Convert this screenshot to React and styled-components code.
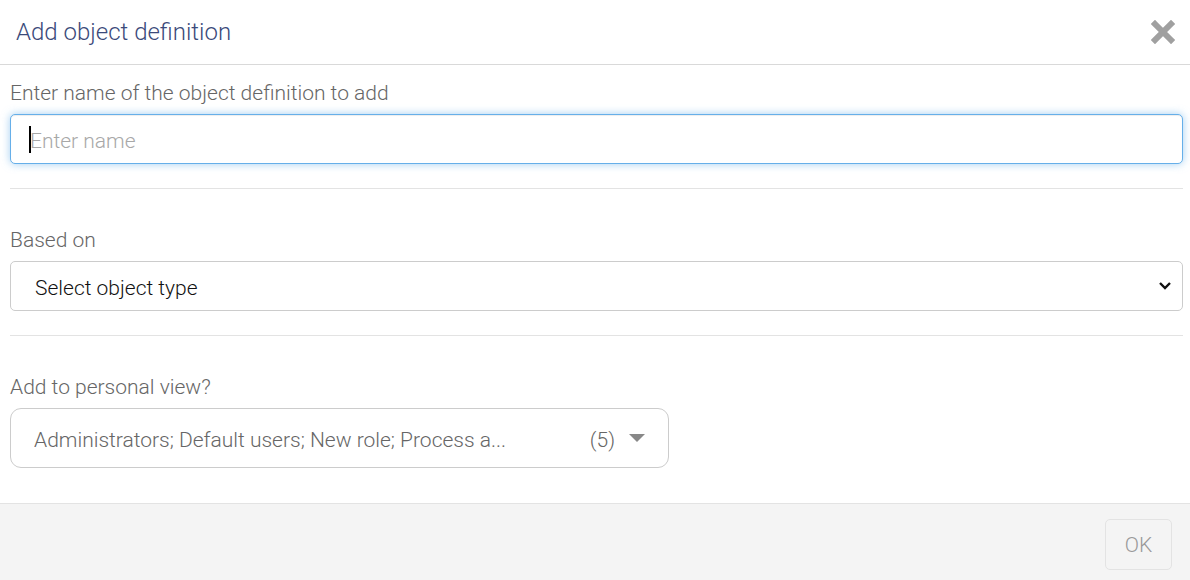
import React from 'react';
import styled, { createGlobalStyle } from 'styled-components';

const GlobalStyle = createGlobalStyle`
  html, body {
    margin: 0;
    padding: 0;
    background: #fff;
  }
  body {
    font-family: Roboto, "Liberation Sans", sans-serif;
  }
  * {
    box-sizing: border-box;
  }
`;

const Dialog = styled.div`
  width: 1190px;
  height: 580px;
  display: flex;
  flex-direction: column;
  background: #fff;
`;

const Header = styled.div`
  height: 65px;
  display: flex;
  align-items: center;
  justify-content: space-between;
  padding: 0 14px 0 16px;
  border-bottom: 1px solid #d9d9d9;
`;

const Title = styled.h4`
  margin: 0;
  font-size: 24px;
  font-weight: 300;
  color: #3b4a7a;
`;

const CloseButton = styled.button`
  background: none;
  border: none;
  padding: 0;
  width: 26px;
  height: 26px;
  display: flex;
  align-items: center;
  justify-content: center;
  cursor: pointer;
  color: #a0a0a0;
`;

const Body = styled.div`
  flex: 1;
  padding: 16px 7px 0 10px;
`;

const Field = styled.div`
  padding-bottom: 24px;
  margin-bottom: ${p => (p.$last ? '0' : '39px')};
  border-bottom: ${p => (p.$last ? 'none' : '1px solid #e3e3e3')};
`;

const Label = styled.label`
  display: block;
  font-size: 21px;
  font-weight: 300;
  color: #666;
  line-height: 24px;
  margin-bottom: 9px;
`;

const InputWrap = styled.div`
  position: relative;
`;

const TextInput = styled.input`
  display: block;
  width: 100%;
  height: 50px;
  padding: 3px 19px 0;
  font-family: inherit;
  font-size: 21px;
  font-weight: 300;
  color: #333;
  border: 1px solid #66afe9;
  border-radius: 5px;
  outline: none;
  caret-color: #000;
  box-shadow: inset 0 1px 1px rgba(0, 0, 0, 0.075), 0 0 8px rgba(102, 175, 233, 0.6);

  &::placeholder {
    color: #a8a8a8;
  }
`;

// text cursor shown in the empty focused field
const TextCursor = styled.span`
  position: absolute;
  left: 19px;
  top: 12px;
  width: 2px;
  height: 27px;
  background: #000;
  pointer-events: none;
`;

const SelectWrap = styled.div`
  position: relative;
`;

const Select = styled.select`
  display: block;
  width: 100%;
  height: 50px;
  padding: 3px 40px 0 24px;
  appearance: none;
  font-family: inherit;
  font-size: 21px;
  font-weight: 300;
  color: #111;
  background: #fff;
  border: 1px solid #ccc;
  border-radius: 5px;
  outline: none;
`;

const Chevron = styled.svg`
  position: absolute;
  right: 11px;
  top: 20px;
  pointer-events: none;
`;

const MultiSelect = styled.div`
  width: 659px;
  height: 60px;
  display: flex;
  align-items: center;
  padding: 3px 23px 0 23px;
  border: 1px solid #ccc;
  border-radius: 11px;
  font-size: 21px;
  font-weight: 300;
  color: #666;
`;

const MultiText = styled.span`
  flex: 1;
  white-space: nowrap;
  overflow: hidden;
`;

const Count = styled.span`
  margin-right: 14px;
`;

const DropArrow = styled.svg`
  margin-bottom: 3px;
`;

const Footer = styled.div`
  height: 77px;
  background: #f4f4f4;
  border-top: 1px solid #e3e3e3;
  display: flex;
  align-items: center;
  justify-content: flex-end;
  padding: 0 18px 0 0;
`;

const OkButton = styled.button`
  width: 67px;
  height: 51px;
  margin-top: 4px;
  padding-top: 3px;
  font-family: inherit;
  font-size: 21px;
  font-weight: 300;
  color: #999;
  background: #f4f4f4;
  border: 1px solid #e3e3e3;
  border-radius: 5px;
`;

function CloseIcon() {
  return (
    <svg width="24" height="24" viewBox="0 0 24 24">
      <path d="M4 4 L20 20 M20 4 L4 20" stroke="currentColor" strokeWidth="6" strokeLinecap="square" />
    </svg>
  );
}

export default function App() {
  return (
    <>
      <GlobalStyle />
      <Dialog>
        <Header>
          <Title>Add object definition</Title>
          <CloseButton aria-label="Close">
            <CloseIcon />
          </CloseButton>
        </Header>
        <Body>
          <Field>
            <Label htmlFor="defName">Enter name of the object definition to add</Label>
            <InputWrap>
              <TextInput id="defName" placeholder="Enter name" />
              <TextCursor />
            </InputWrap>
          </Field>
          <Field>
            <Label htmlFor="basedOn">Based on</Label>
            <SelectWrap>
              <Select id="basedOn" defaultValue="">
                <option value="">Select object type</option>
              </Select>
              <Chevron width="14" height="10" viewBox="0 0 14 10">
                <path d="M2 2 L7 7 L12 2" fill="none" stroke="#111" strokeWidth="2.4" />
              </Chevron>
            </SelectWrap>
          </Field>
          <Field $last>
            <Label>Add to personal view?</Label>
            <MultiSelect>
              <MultiText>Administrators; Default users; New role; Process a...</MultiText>
              <Count>(5)</Count>
              <DropArrow width="16" height="9" viewBox="0 0 16 9">
                <path d="M0 0 H16 L8 8 Z" fill="#888" />
              </DropArrow>
            </MultiSelect>
          </Field>
        </Body>
        <Footer>
          <OkButton>OK</OkButton>
        </Footer>
      </Dialog>
    </>
  );
}
